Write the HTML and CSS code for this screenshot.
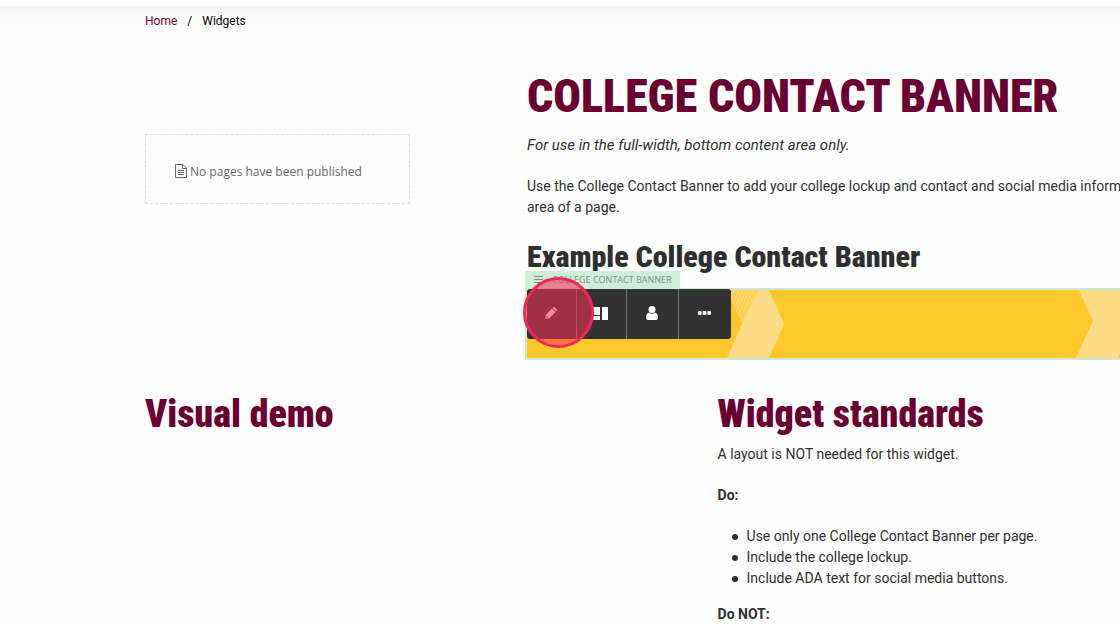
FILE: index.html
```html
<!DOCTYPE html>
<html lang="en">
  <head>
    <meta charset="UTF-8" />
    <meta name="viewport" content="width=device-width, initial-scale=1.0" />
    <title>College Contact Banner</title>
    <link rel="stylesheet" href="styles.css">
  </head>
  <body>
    <header class="topbar"></header>

    <nav class="breadcrumb" aria-label="Breadcrumb">
      <a href="#">Home</a>
      <span>/</span>
      <span>Widgets</span>
    </nav>

    <main>
      <div class="intro">
        <aside class="pages">
          <svg class="icon-page" viewBox="0 0 12 14" width="12" height="14" fill="none" stroke="currentColor">
            <path d="M1 .5h7L11.500 4v9.500H.5V.5H1M7.500.5v4h4M3 6.500h6M3 8.500h6M3 10.500h6" />
          </svg>
          No pages have been published
        </aside>

        <article>
          <h1>College Contact Banner</h1>
          <p class="note">For use in the full-width, bottom content area only.</p>
          <p class="description">Use the College Contact Banner to add your college lockup and contact and social media information<br />area of a page.</p>
          <h3>Example College Contact Banner</h3>

          <section class="banner">
            <svg class="pattern">
              <path d="M204 0h27l-16 32-11-22z" fill="#ffd050" />
              <path d="M204 8l3-8M206 13l6-13M208 17l8-17M209 22l10-22M211 26l11-26M213 29l13-29M215 32l14-32" fill="none" stroke="#ffdc86" />
              <path d="M231 0h11l15 34-15 34h-42l15-34z" fill="#ffdd88" />
              <path d="M552 0h108v68h-18l-3-1v1h-90l17-37z" fill="#ffdd88" />
              <path d="M591 68l3-8v8z" fill="#ffc72c" />
            </svg>
            <div class="tag">
              <svg viewBox="0 0 9 8" width="9" height="8" stroke="currentColor"><path d="M0 .5h9M0 3.500h9M0 6.500h9" /></svg>
              College Contact Banner
            </div>
            <div class="toolbar">
              <button type="button" aria-label="Edit">
                <svg viewBox="0 0 14 14" width="12" height="12" fill="currentColor">
                  <path fill-rule="evenodd" d="M1 9 8.200 1.800 12.200 5.800 5 13 .3 13.700zM1.800 10.600l-.3 1.900 1.900-.3zM8.900 1.100l.7-.7q.9-.7 1.700 0l2.300 2.300q.8.900 0 1.700l-.7.700z" />
                </svg>
              </button>
              <button type="button" aria-label="Layout">
                <svg viewBox="0 0 15 13" width="15" height="13" fill="currentColor">
                  <path d="M0 0h7v8H0zM0 9h7v4H0zM9 0h6v13H9z" />
                </svg>
              </button>
              <button type="button" aria-label="Personalize">
                <svg viewBox="0 0 12 14" width="12" height="14" fill="currentColor">
                  <circle cx="6" cy="3.500" r="3.500" />
                  <path d="M3 6.500q3 2.500 6 0 3 1 3 5 0 2.500-2 2.500H2q-2 0-2-2.500 0-4 3-5z" />
                </svg>
              </button>
              <button type="button" aria-label="More">
                <svg viewBox="0 0 13 4" width="13" height="4" fill="currentColor">
                  <rect width="3.600" height="4" rx="1" />
                  <rect x="4.700" width="3.600" height="4" rx="1" />
                  <rect x="9.400" width="3.600" height="4" rx="1" />
                </svg>
              </button>
            </div>
            <div class="marker"></div>
          </section>
        </article>
      </div>

      <div class="details">
        <section>
          <h2>Visual demo</h2>
        </section>
        <section>
          <h2>Widget standards</h2>
          <p>A layout is NOT needed for this widget.</p>
          <p><strong>Do:</strong></p>
          <ul>
            <li>Use only one College Contact Banner per page.</li>
            <li>Include the college lockup.</li>
            <li>Include ADA text for social media buttons.</li>
          </ul>
          <p><strong>Do NOT:</strong></p>
        </section>
      </div>
    </main>
  </body>
</html>
```

FILE: styles.css
```css
* {
  box-sizing: border-box;
}

body {
  margin: 0;
  overflow: hidden;
  background-color: #fefefe;
  color: #2f2f2f;
  font-family: Roboto, "Liberation Sans", sans-serif;
  font-size: 14px;
  line-height: 21px;
}

h1,
h2,
h3,
p,
ul {
  margin: 0;
}

h1,
h2,
h3 {
  font-family: "Roboto Condensed", "Liberation Sans Narrow", "Liberation Sans", sans-serif;
  font-weight: 900;
  white-space: nowrap;
}

h1,
h2 {
  color: #690031;
}

.topbar {
  height: 6px;
  background-color: white;
}

.breadcrumb {
  display: flex;
  gap: 10px;
  height: 30px;
  padding: 5px 0 0 145px;
  background: linear-gradient(#eff2f2, #f8faf9 4px, #fefefe);
  color: black;
  font-size: 12px;
  line-height: 20px;
}

.breadcrumb a {
  color: #690031;
  text-decoration: none;
}

main {
  padding-left: 145px;
}

.intro {
  display: grid;
  grid-template-columns: 265px 1fr;
  gap: 117px;
}

.intro article {
  min-width: 0;
  padding-top: 32px;
}

.pages {
  display: flex;
  align-items: center;
  align-self: start;
  gap: 3px;
  height: 70px;
  margin-top: 98px;
  padding: 4px 0 0 29px;
  border: 1px dashed #ddd;
  color: #666;
  font-family: "Open Sans", sans-serif;
  font-size: 12px;
}

h1 {
  font-size: 46px;
  line-height: 56px;
  text-transform: uppercase;
}

.note {
  margin-top: 11px;
  font-size: 15px;
  font-style: italic;
}

.description {
  margin-top: 20px;
  overflow: hidden;
  white-space: nowrap;
}

h3 {
  margin-top: 20px;
  font-size: 30px;
  line-height: 38px;
}

.banner {
  position: relative;
  height: 72px;
  margin-top: 12px;
  margin-left: -2px;
  border: 2px solid #cfe8d2;
  border-right: 0;
  background-color: #ffc72c;
}

.pattern {
  display: block;
  width: 100%;
  height: 68px;
}

.tag {
  position: absolute;
  left: -2px;
  bottom: 100%;
  display: flex;
  align-items: center;
  gap: 9px;
  width: 155px;
  height: 19px;
  padding: 0 0 2px 9px;
  background-color: #cdeed9;
  color: #7d9486;
  font-family: "Open Sans", sans-serif;
  font-size: 9px;
  text-transform: uppercase;
  white-space: nowrap;
}

.toolbar {
  position: absolute;
  top: -1px;
  left: 0;
  display: flex;
  height: 50px;
  border-radius: 3px;
  background-color: #323232;
}

.toolbar button {
  display: flex;
  align-items: center;
  justify-content: center;
  width: 52px;
  padding: 0 2px 2px 0;
  border: 0;
  border-right: 1px solid #777;
  background: none;
  color: white;
}

.toolbar button:nth-child(-n + 2) {
  width: 50px;
}

.toolbar button:last-child {
  border-right: 0;
}

/* highlight ring round the edit button */
.marker {
  position: absolute;
  top: -13px;
  left: -4px;
  width: 71px;
  height: 71px;
  border: 3px solid #ee285b;
  border-radius: 50%;
  background-color: rgba(250, 45, 85, 0.55);
  pointer-events: none;
}

.details {
  display: grid;
  grid-template-columns: 4fr 3fr;
  gap: 36px;
  padding-top: 30px;
}

.details section {
  min-width: 0;
}

h2 {
  font-size: 38px;
  line-height: 48px;
}

.details p {
  margin-top: 20px;
}

.details h2 + p {
  margin-top: 6px;
}

ul {
  margin-top: 20px;
  padding-left: 14px;
  list-style: none;
}

li {
  display: flex;
  align-items: center;
  gap: 9px;
}

li::before {
  content: "";
  width: 6px;
  height: 6px;
  border-radius: 50%;
  background-color: #2f2f2f;
}

.details ul + p {
  margin-top: 15px;
}
```
